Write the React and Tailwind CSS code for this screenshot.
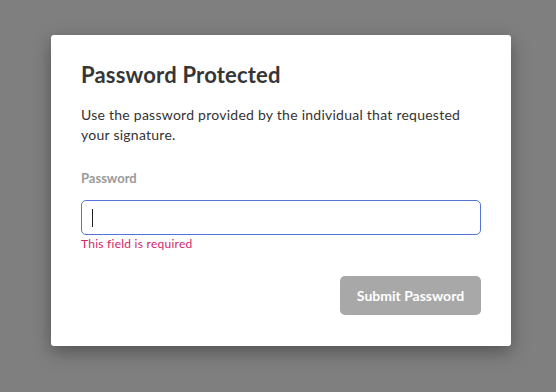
export default function App() {
  return (
    <div
      className="w-[556px] h-[392px] bg-[#7f7f7f] flex items-start pl-[51px] pt-[35px]"
      style={{ fontFamily: "Lato, 'Open Sans', sans-serif" }}
    >
      {/* MODAL */}
      <div className="w-[460px] bg-white rounded-[3px] shadow-[0_6px_18px_rgba(0,0,0,0.35)] px-[30px] pt-[26px] pb-[31px]">
        <h2 className="text-[22px] leading-[28px] font-bold text-[#363636] tracking-[0.2px]">
          Password Protected
        </h2>
        <p className="mt-4 text-[14px] leading-[20px] text-[#333] tracking-[0.25px]">
          Use the password provided by the individual that requested your
          signature.
        </p>

        <label className="block mt-6 text-[13px] leading-[18px] font-bold text-[#9a9a9a]">
          Password
        </label>
        <div className="relative mt-[13px]">
          <input
            type="password"
            className="w-full h-[35px] border border-[#5574d6] rounded-[5px] px-[10px] outline-none"
          />
          <span className="absolute left-[11px] top-[9px] w-px h-[18px] bg-[#222]" />
        </div>
        <p className="mt-[1px] text-[12px] leading-[15px] tracking-[0.25px] text-[#d2246a]">
          This field is required
        </p>

        <div className="flex justify-end mt-[25px]">
          <button className="w-[141px] h-[39px] rounded-[5px] bg-[#a8a8a8] text-white text-[14px] font-bold">
            Submit Password
          </button>
        </div>
      </div>
    </div>
  );
}
